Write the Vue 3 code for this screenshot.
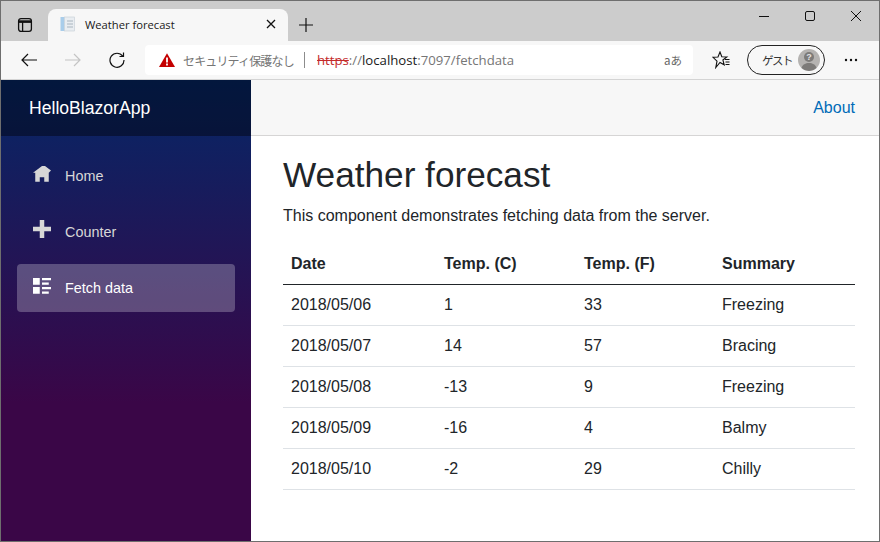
<script setup>
const navItems = [
  { label: 'Home', icon: 'M4 0l-4 3h1v4h2v-2h2v2h2v-4.03l1-.97-4-3z', lift: 'lift-1' },
  { label: 'Counter', icon: 'M3 0v3h-3v2h3v3h2v-3h3v-2h-3v-3h-2z', lift: 'lift-3' },
  { label: 'Fetch data', icon: 'M0 0v3h3v-3h-3zm4 0v1h4v-1h-4zm0 2v1h3v-1h-3zm-4 2v3h3v-3h-3zm4 0v1h4v-1h-4zm0 2v1h3v-1h-3z', lift: 'lift-1', active: true },
]
const rows = [
  ['2018/05/06', '1', '33', 'Freezing'],
  ['2018/05/07', '14', '57', 'Bracing'],
  ['2018/05/08', '-13', '9', 'Freezing'],
  ['2018/05/09', '-16', '4', 'Balmy'],
  ['2018/05/10', '-2', '29', 'Chilly'],
]
</script>

<template>
  <div class="window">
    <div class="strip">
      <svg class="tabs-btn" width="16" height="16" viewBox="0 0 16 16" fill="none" stroke="#111" stroke-width="1.3">
        <rect x="1.6" y="1.6" width="12.8" height="12.8" rx="2.4" />
        <path d="M1.6 4.600h12.800" stroke-width="2.600" />
        <path d="M5.600 4v10.400" />
      </svg>
      <div class="tab">
        <svg class="favicon" width="16" height="16" viewBox="0 0 16 16">
          <rect x="0.5" y="1" width="4" height="14" fill="#a9cdea" />
          <rect x="4.5" y="1" width="10" height="14" fill="#e9edf1" stroke="#c3ccd4" stroke-width="0.6" />
          <path d="M7 5h6M7 8h6M7 11h6" stroke="#bfc8d0" stroke-width="1.4" />
        </svg>
        <span class="tab-title">Weather forecast</span>
        <svg class="tab-close" width="10" height="10" viewBox="0 0 10 10" stroke="#111" stroke-width="1.3">
          <path d="M1 1l8 8M9 1l-8 8" />
        </svg>
      </div>
      <svg class="new-tab" width="14" height="14" viewBox="0 0 14 14" stroke="#111" stroke-width="1.2">
        <path d="M7 0v14M0 7h14" />
      </svg>
      <div class="win-controls">
        <svg width="10" height="10" viewBox="0 0 10 10" stroke="#111" stroke-width="1"><path d="M0 5.500h10" /></svg>
        <svg width="10" height="10" viewBox="0 0 10 10" stroke="#111" stroke-width="1" fill="none"><rect x="0.5" y="0.5" width="9" height="9" rx="1.5" /></svg>
        <svg width="10" height="10" viewBox="0 0 10 10" stroke="#111" stroke-width="1"><path d="M0 0l10 10M10 0l-10 10" /></svg>
      </div>
    </div>

    <div class="toolbar">
      <svg class="back" width="16" height="14" viewBox="0 0 16 14" fill="none" stroke="#111" stroke-width="1.2"><path d="M16 7H1M7 1L1 7l6 6" /></svg>
      <svg class="forward" width="16" height="14" viewBox="0 0 16 14" fill="none" stroke="#c4c4c4" stroke-width="1.2"><path d="M0 7h15M9 1l6 6-6 6" /></svg>
      <svg class="reload" width="16" height="16" viewBox="0 0 16 16" fill="none" stroke="#111" stroke-width="1.2"><path d="M13.7 4.200A7 7 0 1 0 15 8M14.500 0.500v4h-4" /></svg>
      <div class="address">
        <svg class="warn" width="16" height="14" viewBox="0 0 16 14">
          <path d="M8 0.200L16 14H0z" fill="#c40000" />
          <path d="M7.100 4.500h1.800v5H7.100zM7.100 10.600h1.800v1.800H7.100z" fill="#fff" />
        </svg>
        <span class="insecure">セキュリティ保護なし</span>
        <span class="divider"></span>
        <span class="url"><span class="scheme">https</span>://<span class="host">localhost</span>:7097/fetchdata</span>
        <span class="read-aloud">aあ</span>
      </div>
      <svg class="favs" width="18" height="18" viewBox="0 0 18 18" fill="none" stroke="#111" stroke-width="1.1">
        <path d="M8 1l1.800 4.800 5 .2-3.900 3 1.300 4.800L8 11.500 3.800 16.500 5 10.200 1 6.300l5-.3z" />
        <path d="M13 8.500h4.500M13.500 11h4M13.500 13.500h4" />
      </svg>
      <div class="guest">
        <span class="guest-label">ゲスト</span>
        <svg class="avatar" width="22" height="22" viewBox="0 0 22 22">
          <circle cx="11" cy="11" r="11" fill="#b5b3b1" />
          <path d="M3.500 19c1-3.600 4-5 7.500-5s6.500 1.400 7.500 5a11 11 0 0 1-15 0z" fill="#7d7b79" />
          <circle cx="11" cy="8" r="5" fill="#7d7b79" />
          <text x="11" y="11" class="avatar-q">?</text>
        </svg>
      </div>
      <svg class="more" width="14" height="4" viewBox="0 0 14 4" fill="#111">
        <circle cx="2" cy="2" r="1.200" /><circle cx="7" cy="2" r="1.200" /><circle cx="12" cy="2" r="1.200" />
      </svg>
    </div>

    <div class="page">
      <aside class="sidebar">
        <div class="brand-row">HelloBlazorApp</div>
        <nav class="nav">
          <a v-for="item in navItems" :key="item.label" class="nav-item" :class="{ active: item.active }">
            <span class="icon-cell">
              <svg class="nav-icon" :class="item.lift" width="18" height="18" viewBox="0 0 8 8" fill="currentColor"><path :d="item.icon" /></svg>
            </span>
            {{ item.label }}
          </a>
        </nav>
      </aside>
      <main class="main">
        <div class="top-row"><a class="about">About</a></div>
        <article class="content">
          <h1>Weather forecast</h1>
          <p>This component demonstrates fetching data from the server.</p>
          <table>
            <colgroup>
              <col class="c1" /><col class="c2" /><col class="c3" /><col class="c4" />
            </colgroup>
            <thead>
              <tr><th>Date</th><th>Temp. (C)</th><th>Temp. (F)</th><th>Summary</th></tr>
            </thead>
            <tbody>
              <tr v-for="row in rows" :key="row[0]">
                <td v-for="(cell, i) in row" :key="i">{{ cell }}</td>
              </tr>
            </tbody>
          </table>
        </article>
      </main>
    </div>
  </div>
</template>

<style>
html, body { margin: 0; padding: 0; }
</style>

<style scoped>
.window {
  box-sizing: border-box;
  width: 880px;
  height: 542px;
  border: 1px solid #6e6e6e;
  display: flex;
  flex-direction: column;
  overflow: hidden;
  font-family: "Liberation Sans", Arial, sans-serif;
  color: #212529;
  background: #fff;
}
.strip {
  height: 40px;
  flex: none;
  background: #cccccc;
  display: flex;
  align-items: center;
}
.tabs-btn { margin-left: 16px; flex: none; margin-top: 16px; align-self: flex-start; }
.tab {
  margin-left: 15px;
  width: 240px;
  height: 32px;
  align-self: flex-end;
  background: #f7f7f7;
  border-radius: 8px 8px 0 0;
  display: flex;
  align-items: center;
  box-sizing: border-box;
  padding: 0 0 2px 12px;
  flex: none;
}
.favicon { flex: none; }
.tab-title {
  margin-left: 9px;
  font-family: "Open Sans", "Noto Sans", sans-serif;
  font-size: 11.2px;
  color: #1a1a1a;
  white-space: nowrap;
}
.tab-close { margin-left: auto; margin-right: 12px; flex: none; }
.new-tab { margin-left: 11px; flex: none; margin-top: 7px; }
.win-controls {
  margin-left: auto;
  padding-right: 18px;
  display: flex;
  gap: 36px;
  margin-top: -10px;
}
.toolbar {
  height: 39px;
  flex: none;
  box-sizing: border-box;
  background: #f7f7f7;
  border-bottom: 1px solid #d4d4d4;
  display: flex;
  align-items: center;
}
.back { margin-left: 20px; flex: none; }
.forward { margin-left: 28px; flex: none; }
.reload { margin-left: 28px; flex: none; }
.address {
  margin-left: 20px;
  width: 548px;
  height: 30px;
  background: #fff;
  border-radius: 4px;
  display: flex;
  align-items: center;
  flex: none;
  box-sizing: border-box;
  padding-left: 14px;
}
.warn { flex: none; }
.insecure {
  margin-left: 8px;
  font-family: "Noto Sans CJK JP", sans-serif;
  font-size: 12px;
  letter-spacing: -0.85px;
  color: #757575;
  white-space: nowrap;
  width: 110px;
  flex: none;
}
.divider { margin-left: 11px; width: 1px; height: 16px; background: #8c8c8c; flex: none; }
.url {
  margin-left: 12px;
  font-family: "Open Sans", "Noto Sans", sans-serif;
  font-size: 13.2px;
  color: #767676;
  white-space: nowrap;
}
.scheme { color: #c42b2b; text-decoration: line-through; }
.host { color: #1a1a1a; }
.read-aloud {
  margin-left: auto;
  margin-right: 11px;
  font-family: "Noto Sans CJK JP", sans-serif;
  font-size: 11.5px;
  color: #666;
}
.favs { margin-left: 19px; flex: none; }
.guest {
  margin-left: 17px;
  width: 78px;
  height: 30px;
  box-sizing: border-box;
  border: 1px solid #222;
  border-radius: 15px;
  display: flex;
  align-items: center;
  flex: none;
}
.guest-label {
  margin-left: 14px;
  font-family: "Noto Sans CJK JP", sans-serif;
  font-size: 11.5px;
  letter-spacing: -1.5px;
  color: #333;
  width: 36px;
  white-space: nowrap;
}
.avatar { flex: none; }
.avatar-q {
  font-family: "Liberation Sans", sans-serif;
  font-size: 9px;
  font-weight: 700;
  fill: #e4e4e4;
  text-anchor: middle;
}
.more { margin-left: 19px; flex: none; }
.page { flex: 1; display: flex; min-height: 0; }
.sidebar {
  width: 250px;
  flex: none;
  background-image: linear-gradient(180deg, #052767 0%, #3a0647 70%);
  display: flex;
  flex-direction: column;
}
.brand-row {
  height: 56px;
  flex: none;
  box-sizing: border-box;
  padding-left: 28px;
  display: flex;
  align-items: center;
  background: rgba(0, 0, 0, 0.4);
  color: #fff;
  font-size: 17.6px;
}
.nav { padding: 16px 16px 0; display: flex; flex-direction: column; gap: 8px; }
.nav-item {
  height: 48px;
  border-radius: 4px;
  box-sizing: border-box;
  padding-left: 16px;
  display: flex;
  align-items: center;
  color: #d7d7d7;
  font-size: 14.4px;
}
.nav-item.active { background: rgba(255, 255, 255, 0.25); color: #fff; }
.icon-cell { width: 32px; flex: none; display: flex; }
.lift-1 { margin-bottom: 2px; }
.lift-3 { margin-bottom: 6px; }
.main { flex: 1; min-width: 0; display: flex; flex-direction: column; }
.top-row {
  height: 56px;
  flex: none;
  box-sizing: border-box;
  background: #f7f7f7;
  border-bottom: 1px solid #d6d5d5;
  display: flex;
  align-items: center;
  justify-content: flex-end;
  padding-right: 24px;
}
.about { color: #006bb7; font-size: 16px; }
.content { padding: 17.6px 24px 0 32px; }
h1 {
  margin: 0 0 8px;
  font-size: 35.2px;
  line-height: 1.2;
  font-weight: 500;
}
p { margin: 0 0 16px; font-size: 16px; line-height: 24px; }
table {
  width: 572px;
  border-collapse: collapse;
  table-layout: fixed;
  font-size: 16px;
  line-height: 24px;
}
.c1 { width: 153px; }
.c2 { width: 140px; }
.c3 { width: 138px; }
.c4 { width: 141px; }
th {
  text-align: left;
  font-weight: 700;
  padding: 8px;
  border-bottom: 1px solid #212529;
}
td {
  padding: 8px;
  border-bottom: 1px solid #dee2e6;
}
</style>
